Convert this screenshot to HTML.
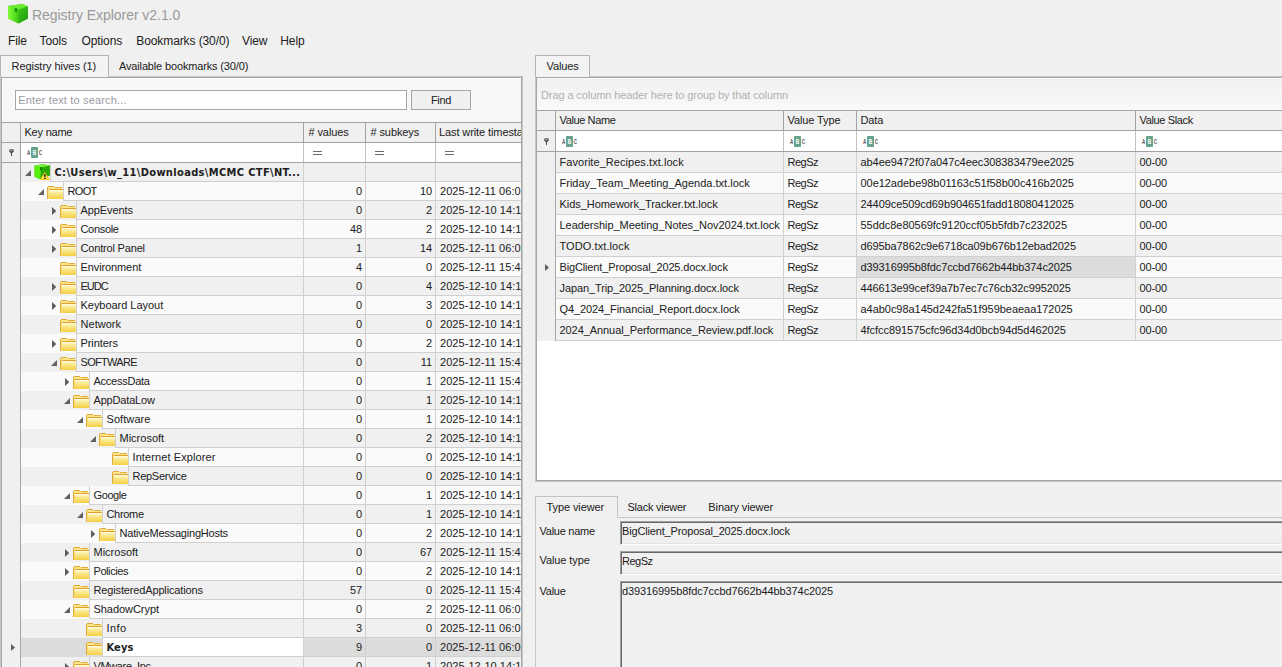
<!DOCTYPE html>
<html lang="en"><head><meta charset="utf-8"><title>Registry Explorer v2.1.0</title>
<style>
html,body{margin:0;padding:0}
body{width:1282px;height:667px;overflow:hidden;background:#f0f0f0;font-family:"Liberation Sans",sans-serif;font-size:11px;color:#202020;position:relative;line-height:13px;letter-spacing:-0.1px}
body *{box-sizing:border-box}
body>div,body>svg{position:absolute}
span{white-space:nowrap}
.appicon{left:8px;top:4px}
.title{left:32px;top:7px;letter-spacing:-0.05px;font-size:14px;line-height:17px;color:#9a9a9a;white-space:nowrap}
.menu{top:34px;letter-spacing:-0.1px;font-size:12px;line-height:14px;color:#202020;white-space:nowrap}
.tab{border:1px solid #b4b4b4;border-bottom:none;background:#f5f5f5}
.tab.sel{background:#f3f3f3}
.tab span{position:absolute;top:4px}
.tabtxt{white-space:nowrap}
.tabline{height:1px;background:#bdbdbd}
.panel{border:1px solid #a6a6a6;background:#f7f7f7;box-shadow:0 0 0 1px #c6c6c6,inset 1px 1px 0 #fcfcfc}
.search{background:#fff;border:1px solid #a5a5a5;box-shadow:0 0 0 1px #fafafa}
.search span{position:absolute;left:2.3px;top:3px;color:#9b9b9f;letter-spacing:0.17px}
.btn{border:1px solid #a5a5a5;background:#f0f0f0;text-align:center;line-height:18px;letter-spacing:-0.3px;box-shadow:0 0 0 1px #fafafa}
.tree,.grid{overflow:hidden}
.tree>div,.grid>div{position:absolute}
.hdrrow{background:#a3a3a3}
.hc{background:#f0f0f0}
.hc span{position:absolute;left:3px;top:3px}
.frow{background:#a3a3a3}
.fc{background:#fff;box-shadow:1px 0 0 #c2c2c2}
.fc.ind{background:#f0f0f0;box-shadow:none}
.pin{position:absolute;left:7px;top:6px}
.abc{position:absolute;left:6px;top:4px}
.eq{position:absolute;left:9px;top:8px;width:9px;height:4px;border-top:1px solid #6a6a6a;border-bottom:1px solid #6a6a6a}
.tr{left:0;width:519px;height:19px}
.tr.ev{background:#f0f0f0}
.tr.od{background:#fafafa}
.tr.sel{background:#dcdcdc}
.tr>*{position:absolute}
.ti{left:0;top:0;width:19px;height:19px;background:#f0f0f0;border-right:1px solid #a6a6a6}
.tc{top:0;height:19px;border-left:1px solid #d0d0d0;border-bottom:1px solid #d0d0d0;overflow:hidden}
.tc span{position:absolute;top:3px}
.tc.name span{left:3.5px}
.tc.num span{right:3px}
.tc.ts span{left:4px;letter-spacing:0.05px}
.tc.b0{font-weight:bold;font-size:11px;font-family:'DejaVu Sans Condensed','DejaVu Sans',sans-serif}
.tc.b0 span{top:3px}
.tc.foc{background:#fff;font-weight:bold;font-size:11px;font-family:'DejaVu Sans Condensed','DejaVu Sans',sans-serif}
.gp{background:linear-gradient(#f0f0f0,#fafafa)}
.gp span{position:absolute;left:4px;top:10px;color:#b0b0b0}
.gr{left:0;width:745px;height:21px}
.gr.ev{background:#f0f0f0}
.gr.od{background:#fafafa}
.gr>*{position:absolute}
.gi{left:0;top:0;width:18px;height:21px;background:#f0f0f0}
.gc{top:0;height:21px;border-left:1px solid #d0d0d0;border-bottom:1px solid #d0d0d0;overflow:hidden}
.gc span{position:absolute;left:3.5px;top:4px}
.gc.fsel{background:#dcdcdc}
.grid{background:#fff}
.tab2{border:1px solid #c3c3c3;border-bottom:none;background:#f0f0f0}
.tab2 span{position:absolute;top:4px}
.tabline2{height:1px;background:#c9c9c9}
.vleft{width:1px;background:#c9c9c9}
.lab{white-space:nowrap;letter-spacing:-0.25px}
.tb{border:1px solid;border-color:#a0a0a0 #fff #fff #a0a0a0;background:#f0f0f0;box-shadow:inset 1px 1px 0 #696969,inset -1px -1px 0 #e3e3e3}
.tb span{position:absolute;left:1px;top:3px}
.gc.first{border-left-color:#a6a6a6}

</style></head>
<body>

<svg width="0" height="0" style="position:absolute"><defs>
<linearGradient id="gf" x1="0" y1="0" x2="0" y2="1"><stop offset="0" stop-color="#fffde4"/><stop offset=".3" stop-color="#fbeb98"/><stop offset="1" stop-color="#f4cf42"/></linearGradient>
<g id="folder"><rect x="1" y="0" width="6" height="1" fill="#e0a83a"/><rect x="8" y="1" width="7" height="1" fill="#e3ad40"/><rect x="1" y="1" width="7" height="3" fill="#fbe68a"/><rect x="8" y="2" width="7.5" height="2" fill="#fbe68a"/><rect x="0" y="1" width="1" height="12" fill="#e2a93c"/><rect x="1" y="3" width="1" height="10" fill="#f8dc70"/><rect x="2" y="3" width="14" height="1" fill="#e0a030"/><rect x="2" y="4" width="14" height="9" fill="url(#gf)"/><rect x="2" y="4" width="2" height="1" fill="#fff"/></g>
<linearGradient id="gl" x1="0" y1="0" x2="1" y2="0"><stop offset="0" stop-color="#86ff33"/><stop offset="1" stop-color="#3ac818"/></linearGradient>
<linearGradient id="gr" x1="0" y1="0" x2="1" y2="1"><stop offset="0" stop-color="#3fc81c"/><stop offset="1" stop-color="#1f9a0c"/></linearGradient>
<g id="cube"><path d="M0.2 1.9L14.5 0L19.9 2.3L19.9 14.5L10.5 19.4L0.2 14.5Z" fill="#3cc41a"/><path d="M0.2 1.9L11 5.2L10.5 19.4L0.2 14.5Z" fill="url(#gl)"/><path d="M11 5.2L19.9 2.3L19.9 14.5L10.5 19.4Z" fill="url(#gr)"/><path d="M0.2 1.9L14.5 0L19.9 2.3L11 5.2Z" fill="#6cec30"/><path d="M6.9 4L9 4.4L9 8.6L6.9 7.8Z" fill="#1d8a0f"/></g>
<g id="hive"><path d="M0.6 1.6L9 0.3L15.9 1.5L15.9 11.5L6.5 15.5L0.6 12.8Z" fill="#38c010"/><path d="M0.6 1.6L7 3.3L6.5 15.5L0.6 12.8Z" fill="#56ee0c"/><path d="M7 3.3L15.9 1.5L15.9 11.5L6.5 15.5Z" fill="#2aa808"/><path d="M0.6 1.6L9 0.3L15.9 1.5L7 3.3Z" fill="#74f636"/><rect x="6" y="3.2" width="1.5" height="3" fill="#0c7400"/><path d="M5.7 16L10.8 8L16.2 16Z" fill="#ffcf1c"/><path d="M7.4 15L10.8 9.6L14.4 15Z" fill="#ffdf4a"/><rect x="10.1" y="10.2" width="1.6" height="2.6" fill="#1a1a30"/><rect x="10.1" y="13.8" width="1.8" height="1.1" fill="#1a1a30"/></g>
<g id="pin"><ellipse cx="2.5" cy="1.5" rx="2.5" ry="1.5" fill="#505050"/><ellipse cx="2.5" cy="1.3" rx="1.3" ry=".45" fill="#f4f4f4"/><path d="M0.3 2.2L4.7 2.2L3 4.6L3 7L2 7L2 4.6Z" fill="#505050"/></g>
<g id="abc"><rect x="4" y="0" width="7" height="11" rx=".7" fill="#66a28c"/><g font-family="Liberation Sans, sans-serif" font-weight="bold" font-size="7"><text x="0" y="8" fill="#555" textLength="3.2" lengthAdjust="spacingAndGlyphs">A</text><text x="5.8" y="8" fill="#fff" textLength="3.4" lengthAdjust="spacingAndGlyphs">B</text><text x="11.8" y="8" fill="#555" textLength="3.2" lengthAdjust="spacingAndGlyphs">C</text></g></g>
</defs></svg>

<svg class="appicon" width="20" height="20" viewBox="0 0 20 20"><use href="#cube"/></svg>
<div class="title">Registry Explorer v2.1.0</div>
<div class="menu" style="left:8px">File</div>
<div class="menu" style="left:39.5px">Tools</div>
<div class="menu" style="left:81.5px">Options</div>
<div class="menu" style="left:136.3px">Bookmarks (30/0)</div>
<div class="menu" style="left:242px">View</div>
<div class="menu" style="left:280.3px">Help</div>
<div class="panel" style="left:1px;top:77px;width:521px;height:600px"></div>
<div class="tab sel" style="left:0;top:55px;width:109px;height:22px"><span style="left:10.5px;letter-spacing:-0.05px">Registry hives (1)</span></div>
<div class="tabtxt" style="left:119px;top:60px;letter-spacing:-0.15px">Available bookmarks (30/0)</div>
<div class="search" style="left:15px;top:90px;width:392px;height:20px"><span>Enter text to search...</span></div>
<div class="btn" style="left:411px;top:90px;width:60px;height:20px">Find</div>
<div class="tree" style="left:2px;top:122px;width:519px;height:545px">
<div class="hdrrow" style="left:0;top:0;width:519px;height:21px"></div>
<div class="hc" style="left:0px;top:1px;width:18px;height:19px"><span></span></div>
<div class="hc" style="left:19px;top:1px;width:282px;height:19px"><span style="letter-spacing:-0.22px;left:3.5px">Key name</span></div>
<div class="hc" style="left:302px;top:1px;width:61px;height:19px"><span style="left:4.5px"># values</span></div>
<div class="hc" style="left:364px;top:1px;width:69px;height:19px"><span style="left:4.5px"># subkeys</span></div>
<div class="hc" style="left:434px;top:1px;width:104px;height:19px"><span>Last write timestamp</span></div>
<div class="frow" style="left:0;top:21px;width:519px;height:20px"></div>
<div class="fc ind" style="left:0px;top:21px;width:18px;height:19px"><svg class="pin" width="5" height="7" viewBox="0 0 5 7"><use href="#pin"/></svg></div>
<div class="fc" style="left:19px;top:21px;width:282px;height:19px"><svg class="abc" width="16" height="11" viewBox="0 0 16 11"><use href="#abc"/></svg></div>
<div class="fc" style="left:302px;top:21px;width:61px;height:19px"><i class="eq"></i></div>
<div class="fc" style="left:364px;top:21px;width:69px;height:19px"><i class="eq"></i></div>
<div class="fc" style="left:434px;top:21px;width:104px;height:19px"><i class="eq"></i></div>
<div class="tr ev" style="top:41px">
<div class="ti"></div>
<svg class="ex" style="left:23px;top:6.7px" width="6" height="6" viewBox="0 0 6 6"><path d="M6 0V6H0Z" fill="#606060"/></svg>
<svg class="ico" style="left:32px;top:1px" width="17" height="17" viewBox="0 0 17 17"><use href="#hive"/></svg>
<div class="tc name b0" style="left:48px;width:253px"><span style="letter-spacing:0.345px">C:\Users\w_11\Downloads\MCMC CTF\NT...</span></div>
<div class="tc num" style="left:301px;width:62px"><span></span></div>
<div class="tc num" style="left:363px;width:70px"><span></span></div>
<div class="tc ts" style="left:433px;width:110px"><span></span></div>
</div>
<div class="tr od" style="top:60px">
<div class="ti"></div>
<svg class="ex" style="left:36px;top:6.7px" width="6" height="6" viewBox="0 0 6 6"><path d="M6 0V6H0Z" fill="#606060"/></svg>
<svg class="ico" style="left:45px;top:4px" width="16" height="13" viewBox="0 0 16 13"><use href="#folder"/></svg>
<div class="tc name" style="left:61px;width:240px"><span style="letter-spacing:-0.648px">ROOT</span></div>
<div class="tc num" style="left:301px;width:62px"><span>0</span></div>
<div class="tc num" style="left:363px;width:70px"><span>10</span></div>
<div class="tc ts" style="left:433px;width:110px"><span>2025-12-11 06:05:14</span></div>
</div>
<div class="tr ev" style="top:79px">
<div class="ti"></div>
<svg class="ex" style="left:50px;top:6px" width="4.4" height="8" viewBox="0 0 4.4 8"><path d="M0 0L4.4 4L0 8Z" fill="#5c5c5c"/></svg>
<svg class="ico" style="left:58px;top:4px" width="16" height="13" viewBox="0 0 16 13"><use href="#folder"/></svg>
<div class="tc name" style="left:74px;width:227px"><span style="letter-spacing:-0.090px">AppEvents</span></div>
<div class="tc num" style="left:301px;width:62px"><span>0</span></div>
<div class="tc num" style="left:363px;width:70px"><span>2</span></div>
<div class="tc ts" style="left:433px;width:110px"><span>2025-12-10 14:12:33</span></div>
</div>
<div class="tr od" style="top:98px">
<div class="ti"></div>
<svg class="ex" style="left:50px;top:6px" width="4.4" height="8" viewBox="0 0 4.4 8"><path d="M0 0L4.4 4L0 8Z" fill="#5c5c5c"/></svg>
<svg class="ico" style="left:58px;top:4px" width="16" height="13" viewBox="0 0 16 13"><use href="#folder"/></svg>
<div class="tc name" style="left:74px;width:227px"><span style="letter-spacing:-0.325px">Console</span></div>
<div class="tc num" style="left:301px;width:62px"><span>48</span></div>
<div class="tc num" style="left:363px;width:70px"><span>2</span></div>
<div class="tc ts" style="left:433px;width:110px"><span>2025-12-10 14:12:33</span></div>
</div>
<div class="tr ev" style="top:117px">
<div class="ti"></div>
<svg class="ex" style="left:50px;top:6px" width="4.4" height="8" viewBox="0 0 4.4 8"><path d="M0 0L4.4 4L0 8Z" fill="#5c5c5c"/></svg>
<svg class="ico" style="left:58px;top:4px" width="16" height="13" viewBox="0 0 16 13"><use href="#folder"/></svg>
<div class="tc name" style="left:74px;width:227px"><span style="letter-spacing:-0.174px">Control Panel</span></div>
<div class="tc num" style="left:301px;width:62px"><span>1</span></div>
<div class="tc num" style="left:363px;width:70px"><span>14</span></div>
<div class="tc ts" style="left:433px;width:110px"><span>2025-12-11 06:05:14</span></div>
</div>
<div class="tr od" style="top:136px">
<div class="ti"></div>
<svg class="ico" style="left:58px;top:4px" width="16" height="13" viewBox="0 0 16 13"><use href="#folder"/></svg>
<div class="tc name" style="left:74px;width:227px"><span style="letter-spacing:-0.105px">Environment</span></div>
<div class="tc num" style="left:301px;width:62px"><span>4</span></div>
<div class="tc num" style="left:363px;width:70px"><span>0</span></div>
<div class="tc ts" style="left:433px;width:110px"><span>2025-12-11 15:41:02</span></div>
</div>
<div class="tr ev" style="top:155px">
<div class="ti"></div>
<svg class="ex" style="left:50px;top:6px" width="4.4" height="8" viewBox="0 0 4.4 8"><path d="M0 0L4.4 4L0 8Z" fill="#5c5c5c"/></svg>
<svg class="ico" style="left:58px;top:4px" width="16" height="13" viewBox="0 0 16 13"><use href="#folder"/></svg>
<div class="tc name" style="left:74px;width:227px"><span style="letter-spacing:-1.020px">EUDC</span></div>
<div class="tc num" style="left:301px;width:62px"><span>0</span></div>
<div class="tc num" style="left:363px;width:70px"><span>4</span></div>
<div class="tc ts" style="left:433px;width:110px"><span>2025-12-10 14:12:33</span></div>
</div>
<div class="tr od" style="top:174px">
<div class="ti"></div>
<svg class="ex" style="left:50px;top:6px" width="4.4" height="8" viewBox="0 0 4.4 8"><path d="M0 0L4.4 4L0 8Z" fill="#5c5c5c"/></svg>
<svg class="ico" style="left:58px;top:4px" width="16" height="13" viewBox="0 0 16 13"><use href="#folder"/></svg>
<div class="tc name" style="left:74px;width:227px"><span style="letter-spacing:-0.031px">Keyboard Layout</span></div>
<div class="tc num" style="left:301px;width:62px"><span>0</span></div>
<div class="tc num" style="left:363px;width:70px"><span>3</span></div>
<div class="tc ts" style="left:433px;width:110px"><span>2025-12-10 14:12:33</span></div>
</div>
<div class="tr ev" style="top:193px">
<div class="ti"></div>
<svg class="ico" style="left:58px;top:4px" width="16" height="13" viewBox="0 0 16 13"><use href="#folder"/></svg>
<div class="tc name" style="left:74px;width:227px"><span style="letter-spacing:0.035px">Network</span></div>
<div class="tc num" style="left:301px;width:62px"><span>0</span></div>
<div class="tc num" style="left:363px;width:70px"><span>0</span></div>
<div class="tc ts" style="left:433px;width:110px"><span>2025-12-10 14:12:33</span></div>
</div>
<div class="tr od" style="top:212px">
<div class="ti"></div>
<svg class="ex" style="left:50px;top:6px" width="4.4" height="8" viewBox="0 0 4.4 8"><path d="M0 0L4.4 4L0 8Z" fill="#5c5c5c"/></svg>
<svg class="ico" style="left:58px;top:4px" width="16" height="13" viewBox="0 0 16 13"><use href="#folder"/></svg>
<div class="tc name" style="left:74px;width:227px"><span style="letter-spacing:-0.064px">Printers</span></div>
<div class="tc num" style="left:301px;width:62px"><span>0</span></div>
<div class="tc num" style="left:363px;width:70px"><span>2</span></div>
<div class="tc ts" style="left:433px;width:110px"><span>2025-12-10 14:12:33</span></div>
</div>
<div class="tr ev" style="top:231px">
<div class="ti"></div>
<svg class="ex" style="left:49px;top:6.7px" width="6" height="6" viewBox="0 0 6 6"><path d="M6 0V6H0Z" fill="#606060"/></svg>
<svg class="ico" style="left:58px;top:4px" width="16" height="13" viewBox="0 0 16 13"><use href="#folder"/></svg>
<div class="tc name" style="left:74px;width:227px"><span style="letter-spacing:-0.691px">SOFTWARE</span></div>
<div class="tc num" style="left:301px;width:62px"><span>0</span></div>
<div class="tc num" style="left:363px;width:70px"><span>11</span></div>
<div class="tc ts" style="left:433px;width:110px"><span>2025-12-11 15:41:02</span></div>
</div>
<div class="tr od" style="top:250px">
<div class="ti"></div>
<svg class="ex" style="left:63px;top:6px" width="4.4" height="8" viewBox="0 0 4.4 8"><path d="M0 0L4.4 4L0 8Z" fill="#5c5c5c"/></svg>
<svg class="ico" style="left:71px;top:4px" width="16" height="13" viewBox="0 0 16 13"><use href="#folder"/></svg>
<div class="tc name" style="left:87px;width:214px"><span style="letter-spacing:-0.250px">AccessData</span></div>
<div class="tc num" style="left:301px;width:62px"><span>0</span></div>
<div class="tc num" style="left:363px;width:70px"><span>1</span></div>
<div class="tc ts" style="left:433px;width:110px"><span>2025-12-11 15:41:02</span></div>
</div>
<div class="tr ev" style="top:269px">
<div class="ti"></div>
<svg class="ex" style="left:62px;top:6.7px" width="6" height="6" viewBox="0 0 6 6"><path d="M6 0V6H0Z" fill="#606060"/></svg>
<svg class="ico" style="left:71px;top:4px" width="16" height="13" viewBox="0 0 16 13"><use href="#folder"/></svg>
<div class="tc name" style="left:87px;width:214px"><span style="letter-spacing:-0.170px">AppDataLow</span></div>
<div class="tc num" style="left:301px;width:62px"><span>0</span></div>
<div class="tc num" style="left:363px;width:70px"><span>1</span></div>
<div class="tc ts" style="left:433px;width:110px"><span>2025-12-10 14:12:33</span></div>
</div>
<div class="tr od" style="top:288px">
<div class="ti"></div>
<svg class="ex" style="left:75px;top:6.7px" width="6" height="6" viewBox="0 0 6 6"><path d="M6 0V6H0Z" fill="#606060"/></svg>
<svg class="ico" style="left:84px;top:4px" width="16" height="13" viewBox="0 0 16 13"><use href="#folder"/></svg>
<div class="tc name" style="left:100px;width:201px"><span style="letter-spacing:0.074px">Software</span></div>
<div class="tc num" style="left:301px;width:62px"><span>0</span></div>
<div class="tc num" style="left:363px;width:70px"><span>1</span></div>
<div class="tc ts" style="left:433px;width:110px"><span>2025-12-10 14:12:33</span></div>
</div>
<div class="tr ev" style="top:307px">
<div class="ti"></div>
<svg class="ex" style="left:88px;top:6.7px" width="6" height="6" viewBox="0 0 6 6"><path d="M6 0V6H0Z" fill="#606060"/></svg>
<svg class="ico" style="left:97px;top:4px" width="16" height="13" viewBox="0 0 16 13"><use href="#folder"/></svg>
<div class="tc name" style="left:113px;width:188px"><span style="letter-spacing:-0.002px">Microsoft</span></div>
<div class="tc num" style="left:301px;width:62px"><span>0</span></div>
<div class="tc num" style="left:363px;width:70px"><span>2</span></div>
<div class="tc ts" style="left:433px;width:110px"><span>2025-12-10 14:12:33</span></div>
</div>
<div class="tr od" style="top:326px">
<div class="ti"></div>
<svg class="ico" style="left:110px;top:4px" width="16" height="13" viewBox="0 0 16 13"><use href="#folder"/></svg>
<div class="tc name" style="left:126px;width:175px"><span style="letter-spacing:0.093px">Internet Explorer</span></div>
<div class="tc num" style="left:301px;width:62px"><span>0</span></div>
<div class="tc num" style="left:363px;width:70px"><span>0</span></div>
<div class="tc ts" style="left:433px;width:110px"><span>2025-12-10 14:12:33</span></div>
</div>
<div class="tr ev" style="top:345px">
<div class="ti"></div>
<svg class="ico" style="left:110px;top:4px" width="16" height="13" viewBox="0 0 16 13"><use href="#folder"/></svg>
<div class="tc name" style="left:126px;width:175px"><span style="letter-spacing:-0.276px">RepService</span></div>
<div class="tc num" style="left:301px;width:62px"><span>0</span></div>
<div class="tc num" style="left:363px;width:70px"><span>0</span></div>
<div class="tc ts" style="left:433px;width:110px"><span>2025-12-10 14:12:33</span></div>
</div>
<div class="tr od" style="top:364px">
<div class="ti"></div>
<svg class="ex" style="left:62px;top:6.7px" width="6" height="6" viewBox="0 0 6 6"><path d="M6 0V6H0Z" fill="#606060"/></svg>
<svg class="ico" style="left:71px;top:4px" width="16" height="13" viewBox="0 0 16 13"><use href="#folder"/></svg>
<div class="tc name" style="left:87px;width:214px"><span style="letter-spacing:-0.396px">Google</span></div>
<div class="tc num" style="left:301px;width:62px"><span>0</span></div>
<div class="tc num" style="left:363px;width:70px"><span>1</span></div>
<div class="tc ts" style="left:433px;width:110px"><span>2025-12-10 14:12:33</span></div>
</div>
<div class="tr ev" style="top:383px">
<div class="ti"></div>
<svg class="ex" style="left:75px;top:6.7px" width="6" height="6" viewBox="0 0 6 6"><path d="M6 0V6H0Z" fill="#606060"/></svg>
<svg class="ico" style="left:84px;top:4px" width="16" height="13" viewBox="0 0 16 13"><use href="#folder"/></svg>
<div class="tc name" style="left:100px;width:201px"><span style="letter-spacing:-0.322px">Chrome</span></div>
<div class="tc num" style="left:301px;width:62px"><span>0</span></div>
<div class="tc num" style="left:363px;width:70px"><span>1</span></div>
<div class="tc ts" style="left:433px;width:110px"><span>2025-12-10 14:12:33</span></div>
</div>
<div class="tr od" style="top:402px">
<div class="ti"></div>
<svg class="ex" style="left:89px;top:6px" width="4.4" height="8" viewBox="0 0 4.4 8"><path d="M0 0L4.4 4L0 8Z" fill="#5c5c5c"/></svg>
<svg class="ico" style="left:97px;top:4px" width="16" height="13" viewBox="0 0 16 13"><use href="#folder"/></svg>
<div class="tc name" style="left:113px;width:188px"><span style="letter-spacing:-0.205px">NativeMessagingHosts</span></div>
<div class="tc num" style="left:301px;width:62px"><span>0</span></div>
<div class="tc num" style="left:363px;width:70px"><span>2</span></div>
<div class="tc ts" style="left:433px;width:110px"><span>2025-12-10 14:12:33</span></div>
</div>
<div class="tr ev" style="top:421px">
<div class="ti"></div>
<svg class="ex" style="left:63px;top:6px" width="4.4" height="8" viewBox="0 0 4.4 8"><path d="M0 0L4.4 4L0 8Z" fill="#5c5c5c"/></svg>
<svg class="ico" style="left:71px;top:4px" width="16" height="13" viewBox="0 0 16 13"><use href="#folder"/></svg>
<div class="tc name" style="left:87px;width:214px"><span style="letter-spacing:-0.002px">Microsoft</span></div>
<div class="tc num" style="left:301px;width:62px"><span>0</span></div>
<div class="tc num" style="left:363px;width:70px"><span>67</span></div>
<div class="tc ts" style="left:433px;width:110px"><span>2025-12-11 15:41:02</span></div>
</div>
<div class="tr od" style="top:440px">
<div class="ti"></div>
<svg class="ex" style="left:63px;top:6px" width="4.4" height="8" viewBox="0 0 4.4 8"><path d="M0 0L4.4 4L0 8Z" fill="#5c5c5c"/></svg>
<svg class="ico" style="left:71px;top:4px" width="16" height="13" viewBox="0 0 16 13"><use href="#folder"/></svg>
<div class="tc name" style="left:87px;width:214px"><span style="letter-spacing:-0.426px">Policies</span></div>
<div class="tc num" style="left:301px;width:62px"><span>0</span></div>
<div class="tc num" style="left:363px;width:70px"><span>2</span></div>
<div class="tc ts" style="left:433px;width:110px"><span>2025-12-10 14:12:33</span></div>
</div>
<div class="tr ev" style="top:459px">
<div class="ti"></div>
<svg class="ico" style="left:71px;top:4px" width="16" height="13" viewBox="0 0 16 13"><use href="#folder"/></svg>
<div class="tc name" style="left:87px;width:214px"><span style="letter-spacing:-0.146px">RegisteredApplications</span></div>
<div class="tc num" style="left:301px;width:62px"><span>57</span></div>
<div class="tc num" style="left:363px;width:70px"><span>0</span></div>
<div class="tc ts" style="left:433px;width:110px"><span>2025-12-11 15:41:02</span></div>
</div>
<div class="tr od" style="top:478px">
<div class="ti"></div>
<svg class="ex" style="left:62px;top:6.7px" width="6" height="6" viewBox="0 0 6 6"><path d="M6 0V6H0Z" fill="#606060"/></svg>
<svg class="ico" style="left:71px;top:4px" width="16" height="13" viewBox="0 0 16 13"><use href="#folder"/></svg>
<div class="tc name" style="left:87px;width:214px"><span style="letter-spacing:-0.049px">ShadowCrypt</span></div>
<div class="tc num" style="left:301px;width:62px"><span>0</span></div>
<div class="tc num" style="left:363px;width:70px"><span>2</span></div>
<div class="tc ts" style="left:433px;width:110px"><span>2025-12-11 06:05:14</span></div>
</div>
<div class="tr ev" style="top:497px">
<div class="ti"></div>
<svg class="ico" style="left:84px;top:4px" width="16" height="13" viewBox="0 0 16 13"><use href="#folder"/></svg>
<div class="tc name" style="left:100px;width:201px"><span style="letter-spacing:0.412px">Info</span></div>
<div class="tc num" style="left:301px;width:62px"><span>3</span></div>
<div class="tc num" style="left:363px;width:70px"><span>0</span></div>
<div class="tc ts" style="left:433px;width:110px"><span>2025-12-11 06:05:14</span></div>
</div>
<div class="tr sel" style="top:516px">
<div class="ti"><svg width="4" height="7" viewBox="0 0 4 7" style="position:absolute;left:8.5px;top:6px"><path d="M0 0L4 3.5L0 7Z" fill="#606060"/></svg></div>
<svg class="ico" style="left:84px;top:4px" width="16" height="13" viewBox="0 0 16 13"><use href="#folder"/></svg>
<div class="tc name foc" style="left:100px;width:201px"><span style="letter-spacing:0.140px">Keys</span></div>
<div class="tc num" style="left:301px;width:62px"><span>9</span></div>
<div class="tc num" style="left:363px;width:70px"><span>0</span></div>
<div class="tc ts" style="left:433px;width:110px"><span>2025-12-11 06:05:14</span></div>
</div>
<div class="tr ev" style="top:535px">
<div class="ti"></div>
<svg class="ex" style="left:63px;top:6px" width="4.4" height="8" viewBox="0 0 4.4 8"><path d="M0 0L4.4 4L0 8Z" fill="#5c5c5c"/></svg>
<svg class="ico" style="left:71px;top:4px" width="16" height="13" viewBox="0 0 16 13"><use href="#folder"/></svg>
<div class="tc name" style="left:87px;width:214px"><span style="letter-spacing:-0.367px">VMware, Inc.</span></div>
<div class="tc num" style="left:301px;width:62px"><span>0</span></div>
<div class="tc num" style="left:363px;width:70px"><span>1</span></div>
<div class="tc ts" style="left:433px;width:110px"><span>2025-12-10 14:12:33</span></div>
</div>
</div>
<div class="panel" style="left:536px;top:77px;width:800px;height:404px"></div>
<div class="tab sel" style="left:535px;top:55px;width:55px;height:22px"><span style="left:10.5px">Values</span></div>
<div class="grid" style="left:537px;top:79px;width:745px;height:401px">
<div class="gp" style="left:0;top:0;width:745px;height:31px"><span>Drag a column header here to group by that column</span></div>
<div class="hdrrow" style="left:0;top:31px;width:745px;height:21px"></div>
<div class="hc" style="left:0px;top:32px;width:18px;height:19px"><span style="left:3.5px;letter-spacing:0px"></span></div>
<div class="hc" style="left:19px;top:32px;width:227px;height:19px"><span style="left:3.5px;letter-spacing:-0.38px">Value Name</span></div>
<div class="hc" style="left:247px;top:32px;width:72px;height:19px"><span style="left:3.5px;letter-spacing:-0.1px">Value Type</span></div>
<div class="hc" style="left:320px;top:32px;width:278px;height:19px"><span style="left:3.5px;letter-spacing:-0.1px">Data</span></div>
<div class="hc" style="left:599px;top:32px;width:264px;height:19px"><span style="left:3.5px;letter-spacing:-0.35px">Value Slack</span></div>
<div class="frow" style="left:0;top:52px;width:745px;height:21px"></div>
<div class="fc ind" style="left:0px;top:52px;width:18px;height:20px"><svg class="pin" style="top:7px" width="5" height="7" viewBox="0 0 5 7"><use href="#pin"/></svg></div>
<div class="fc" style="left:19px;top:52px;width:227px;height:20px"><svg class="abc" style="top:5px" width="16" height="11" viewBox="0 0 16 11"><use href="#abc"/></svg></div>
<div class="fc" style="left:247px;top:52px;width:72px;height:20px"><svg class="abc" style="top:5px" width="16" height="11" viewBox="0 0 16 11"><use href="#abc"/></svg></div>
<div class="fc" style="left:320px;top:52px;width:278px;height:20px"><svg class="abc" style="top:5px" width="16" height="11" viewBox="0 0 16 11"><use href="#abc"/></svg></div>
<div class="fc" style="left:599px;top:52px;width:264px;height:20px"><svg class="abc" style="top:5px" width="16" height="11" viewBox="0 0 16 11"><use href="#abc"/></svg></div>
<div class="gr ev" style="top:73px">
<div class="gi"></div>
<div class="gc first" style="left:18px;width:228px"><span style="letter-spacing:0.052px">Favorite_Recipes.txt.lock</span></div>
<div class="gc" style="left:246px;width:73px"><span style="letter-spacing:-0.5px">RegSz</span></div>
<div class="gc" style="left:319px;width:279px"><span style="letter-spacing:-0.071px">ab4ee9472f07a047c4eec308383479ee2025</span></div>
<div class="gc" style="left:598px;width:300px"><span>00-00</span></div>
</div>
<div class="gr od" style="top:94px">
<div class="gi"></div>
<div class="gc first" style="left:18px;width:228px"><span style="letter-spacing:0.004px">Friday_Team_Meeting_Agenda.txt.lock</span></div>
<div class="gc" style="left:246px;width:73px"><span style="letter-spacing:-0.5px">RegSz</span></div>
<div class="gc" style="left:319px;width:279px"><span style="letter-spacing:-0.048px">00e12adebe98b01163c51f58b00c416b2025</span></div>
<div class="gc" style="left:598px;width:300px"><span>00-00</span></div>
</div>
<div class="gr ev" style="top:115px">
<div class="gi"></div>
<div class="gc first" style="left:18px;width:228px"><span style="letter-spacing:-0.052px">Kids_Homework_Tracker.txt.lock</span></div>
<div class="gc" style="left:246px;width:73px"><span style="letter-spacing:-0.5px">RegSz</span></div>
<div class="gc" style="left:319px;width:279px"><span style="letter-spacing:-0.071px">24409ce509cd69b904651fadd18080412025</span></div>
<div class="gc" style="left:598px;width:300px"><span>00-00</span></div>
</div>
<div class="gr od" style="top:136px">
<div class="gi"></div>
<div class="gc first" style="left:18px;width:228px"><span style="letter-spacing:-0.043px">Leadership_Meeting_Notes_Nov2024.txt.lock</span></div>
<div class="gc" style="left:246px;width:73px"><span style="letter-spacing:-0.5px">RegSz</span></div>
<div class="gc" style="left:319px;width:279px"><span style="letter-spacing:-0.041px">55ddc8e80569fc9120ccf05b5fdb7c232025</span></div>
<div class="gc" style="left:598px;width:300px"><span>00-00</span></div>
</div>
<div class="gr ev" style="top:157px">
<div class="gi"></div>
<div class="gc first" style="left:18px;width:228px"><span style="letter-spacing:0.086px">TODO.txt.lock</span></div>
<div class="gc" style="left:246px;width:73px"><span style="letter-spacing:-0.5px">RegSz</span></div>
<div class="gc" style="left:319px;width:279px"><span style="letter-spacing:-0.100px">d695ba7862c9e6718ca09b676b12ebad2025</span></div>
<div class="gc" style="left:598px;width:300px"><span>00-00</span></div>
</div>
<div class="gr od" style="top:178px">
<div class="gi"><svg width="4" height="7" viewBox="0 0 4 7" style="position:absolute;left:8.3px;top:7px"><path d="M0 0L4 3.5L0 7Z" fill="#606060"/></svg></div>
<div class="gc first" style="left:18px;width:228px"><span style="letter-spacing:-0.144px">BigClient_Proposal_2025.docx.lock</span></div>
<div class="gc" style="left:246px;width:73px"><span style="letter-spacing:-0.5px">RegSz</span></div>
<div class="gc fsel" style="left:319px;width:279px"><span style="letter-spacing:-0.092px">d39316995b8fdc7ccbd7662b44bb374c2025</span></div>
<div class="gc" style="left:598px;width:300px"><span>00-00</span></div>
</div>
<div class="gr ev" style="top:199px">
<div class="gi"></div>
<div class="gc first" style="left:18px;width:228px"><span style="letter-spacing:-0.110px">Japan_Trip_2025_Planning.docx.lock</span></div>
<div class="gc" style="left:246px;width:73px"><span style="letter-spacing:-0.5px">RegSz</span></div>
<div class="gc" style="left:319px;width:279px"><span style="letter-spacing:-0.108px">446613e99cef39a7b7ec7c76cb32c9952025</span></div>
<div class="gc" style="left:598px;width:300px"><span>00-00</span></div>
</div>
<div class="gr od" style="top:220px">
<div class="gi"></div>
<div class="gc first" style="left:18px;width:228px"><span style="letter-spacing:-0.095px">Q4_2024_Financial_Report.docx.lock</span></div>
<div class="gc" style="left:246px;width:73px"><span style="letter-spacing:-0.5px">RegSz</span></div>
<div class="gc" style="left:319px;width:279px"><span style="letter-spacing:-0.036px">a4ab0c98a145d242fa51f959beaeaa172025</span></div>
<div class="gc" style="left:598px;width:300px"><span>00-00</span></div>
</div>
<div class="gr ev" style="top:241px">
<div class="gi"></div>
<div class="gc first" style="left:18px;width:228px"><span style="letter-spacing:-0.069px">2024_Annual_Performance_Review.pdf.lock</span></div>
<div class="gc" style="left:246px;width:73px"><span style="letter-spacing:-0.5px">RegSz</span></div>
<div class="gc" style="left:319px;width:279px"><span style="letter-spacing:-0.057px">4fcfcc891575cfc96d34d0bcb94d5d462025</span></div>
<div class="gc" style="left:598px;width:300px"><span>00-00</span></div>
</div>
</div>
<div class="tabline2" style="left:535px;top:517px;width:760px"></div>
<div class="tab2 sel" style="left:535px;top:496px;width:83px;height:22px"><span style="left:10.5px">Type viewer</span></div>
<div class="tabtxt" style="left:627.5px;top:501px;letter-spacing:-0.25px">Slack viewer</div>
<div class="tabtxt" style="left:708.3px;top:501px;letter-spacing:-0.1px">Binary viewer</div>
<div class="vleft" style="left:535px;top:517px;height:160px"></div>
<div class="lab" style="left:539.5px;top:525px;letter-spacing:-0.25px">Value name</div>
<div class="tb" style="left:620px;top:521px;width:700px;height:24px"><span style="letter-spacing:-0.16px">BigClient_Proposal_2025.docx.lock</span></div>
<div class="lab" style="left:539.5px;top:554px;letter-spacing:-0.1px">Value type</div>
<div class="tb" style="left:620px;top:551px;width:700px;height:24px"><span style="letter-spacing:-0.5px">RegSz</span></div>
<div class="lab" style="left:539.5px;top:585px;letter-spacing:-0.25px">Value</div>
<div class="tb" style="left:620px;top:581px;width:700px;height:120px"><span style="letter-spacing:-0.1px">d39316995b8fdc7ccbd7662b44bb374c2025</span></div>

</body></html>
